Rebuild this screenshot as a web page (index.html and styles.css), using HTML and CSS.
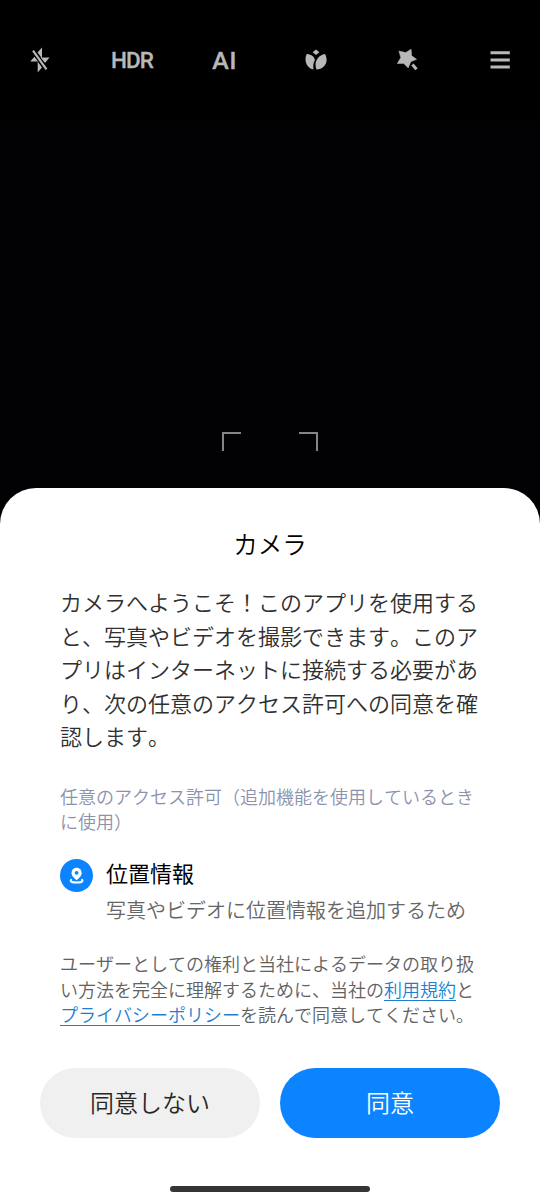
FILE: index.html
```html
<!DOCTYPE html>
<html lang="ja">
<head>
<meta charset="utf-8">
<title>カメラ</title>
<link rel="stylesheet" href="styles.css">
</head>
<body>
<div class="screen">
  <header class="toolbar">
    <div class="tool"><svg width="24" height="30" viewBox="0 0 24 30" fill="#b8b8b8"><path d="M14 2.500v11l-4.500-6zM2.200 16.500l4.500-5 5 5zM9.700 16.500l4.300 6-4.300 5zM12 12.500h9.500l-4.500 5.500z"/><path d="M4.700 5.700L18.700 24.300" stroke="#000" stroke-width="4.500"/><path d="M5 5.700L18.500 24.300" stroke="#b8b8b8" stroke-width="2.200"/></svg></div>
    <div class="tool hdr">HDR</div>
    <div class="tool ai">AI</div>
    <div class="tool"><svg width="24" height="24" viewBox="0 0 24 24" fill="#b8b8b8"><path d="M12 1.600l3.400 2.600-3.400 2.900L8.600 4.200zM3.400 5.900c4 .4 7 2.800 7.600 6.200-1.700 2.800-2 5.700-1.500 9.300C2.500 20.200-.1 12.500 2.500 6.300zM21 5.900c4.200 7.500-.2 15.500-8.600 15.500C9.800 14.500 13.300 7.300 21 5.900z"/></svg></div>
    <div class="tool"><svg width="24" height="24" viewBox="0 0 24 24" fill="#b8b8b8"><path d="M15.100 1.200l.6 6.600 4.900 3.500-5.800 2.500-2.600 6.100-4.500-4.500-6.400.1 3.500-5.900-1.900-6.500 6.900 1.500z" stroke="#b8b8b8" stroke-width=".5" stroke-linejoin="round"/><path d="M16.400 16.500l4.100 4.800" stroke="#b8b8b8" stroke-width="3"/></svg></div>
    <div class="tool"><svg width="24" height="24" viewBox="0 0 24 24" fill="#b8b8b8"><path d="M2.500 3.300h19.300v2.900H2.500zM2.500 10.500h19.300v2.900H2.500zM2.500 17.500h19.300v2.900H2.500z"/></svg></div>
  </header>
  <main class="viewfinder">
    <div class="corners"><i class="corner left"></i><i class="corner right"></i></div>
  </main>
  <section class="sheet">
    <h1 class="title">カメラ</h1>
    <div class="content">
      <p class="welcome">カメラへようこそ！このアプリを使用する<br>と、写真やビデオを撮影できます。このア<br>プリはインターネットに接続する必要があ<br>り、次の任意のアクセス許可への同意を確<br>認します。</p>
      <p class="optional">任意のアクセス許可（追加機能を使用しているとき<br>に使用）</p>
      <div class="permission">
        <svg class="pin" width="33" height="33" viewBox="0 0 33 33"><circle cx="16.500" cy="16.500" r="16.500" fill="#0d84ff"/><path d="M16.600 21.200c-3.400-3-5.100-4.800-5.100-7.300a5.100 5.100 0 0110.200 0c0 2.500-1.700 4.300-5.100 7.300z" fill="#fff"/><circle cx="16.600" cy="13.800" r="1.900" fill="#0d84ff"/><path d="M11.100 21c-1.100 1.900 1.300 2.500 5.500 2.500s6.600-.6 5.500-2.500" fill="none" stroke="#fff" stroke-width="2.200" stroke-linecap="round"/></svg>
        <div>
          <h2 class="perm-name">位置情報</h2>
          <p class="perm-text">写真やビデオに位置情報を追加するため</p>
        </div>
      </div>
      <p class="terms">ユーザーとしての権利と当社によるデータの取り扱<br>い方法を完全に理解するために、当社の<a class="link">利用規約</a>と<br><a class="link">プライバシーポリシー</a>を読んで同意してください。</p>
    </div>
    <div class="actions">
      <button class="button">同意しない</button>
      <button class="button primary">同意</button>
    </div>
    <div class="home-bar"></div>
  </section>
</div>
</body>
</html>
```
FILE: styles.css
```css
* { box-sizing: border-box; margin: 0; padding: 0; }
body {
  background: #000;
  font-family: "Noto Sans CJK JP", sans-serif;
  font-weight: 350;
  font-kerning: none;
  text-spacing-trim: space-all;
}
.screen { width: 540px; height: 1200px; display: flex; flex-direction: column; overflow: hidden; background: #020204; }
.toolbar { height: 120px; padding: 0 10px; background: #000; display: flex; justify-content: space-between; align-items: center; }
.tool { width: 60px; height: 30px; display: flex; align-items: center; justify-content: center; color: #b8b8b8; font: 500 22px/30px Roboto, sans-serif; }
.tool svg { display: block; }
.hdr { font-size: 22.500px; letter-spacing: -0.900px; -webkit-text-stroke: 0.300px #b8b8b8; }
.ai { font-family: Lato, sans-serif; font-weight: 700; font-size: 23px; letter-spacing: 1px; padding-left: 2px; -webkit-text-stroke: 0.300px #b8b8b8; }
.viewfinder { height: 368px; padding-top: 312px; }
.corners { width: 96px; margin: 0 auto; display: flex; justify-content: space-between; }
.corner { width: 19px; height: 19px; border-top: 2px solid #858585; }
.left { border-left: 2px solid #858585; }
.right { border-right: 2px solid #858585; }
.sheet { height: 712px; background: #fff; border-radius: 36px 36px 0 0; padding: 36px 40px 0; }
.title { font-size: 24.500px; line-height: 40px; font-weight: 350; text-align: center; color: #000; }
.content { padding: 21px 0 0 20px; white-space: nowrap; }
.welcome { font-size: 22px; line-height: 33.500px; color: #303030; }
.optional { margin-top: 31px; font-size: 18px; line-height: 25.400px; color: #8b93ac; }
.permission { margin-top: 22px; display: flex; gap: 13px; }
.pin { margin-top: 3px; }
.perm-name { font-size: 22px; line-height: 32px; font-weight: 400; color: #000; }
.perm-text { margin-top: 7px; font-size: 20px; line-height: 30px; color: #666; }
.terms { margin-top: 26px; font-size: 18px; line-height: 25.400px; color: #616161; }
.link { color: #1e7fd1; text-decoration: underline; text-decoration-thickness: 1px; text-underline-offset: 3px; text-decoration-skip-ink: none; }
.actions { display: flex; gap: 20px; margin-top: 40px; }
.button { flex: 1; height: 70px; border: 0; border-radius: 35px; background: #f0f0f0; color: #282828; font: inherit; font-size: 24px; line-height: 36px; padding-bottom: 1px; }
.primary { background: #0d84ff; color: #fff; }
.home-bar { width: 200px; height: 6px; border-radius: 3px; background: #343634; margin: 48px auto 0; }
```
